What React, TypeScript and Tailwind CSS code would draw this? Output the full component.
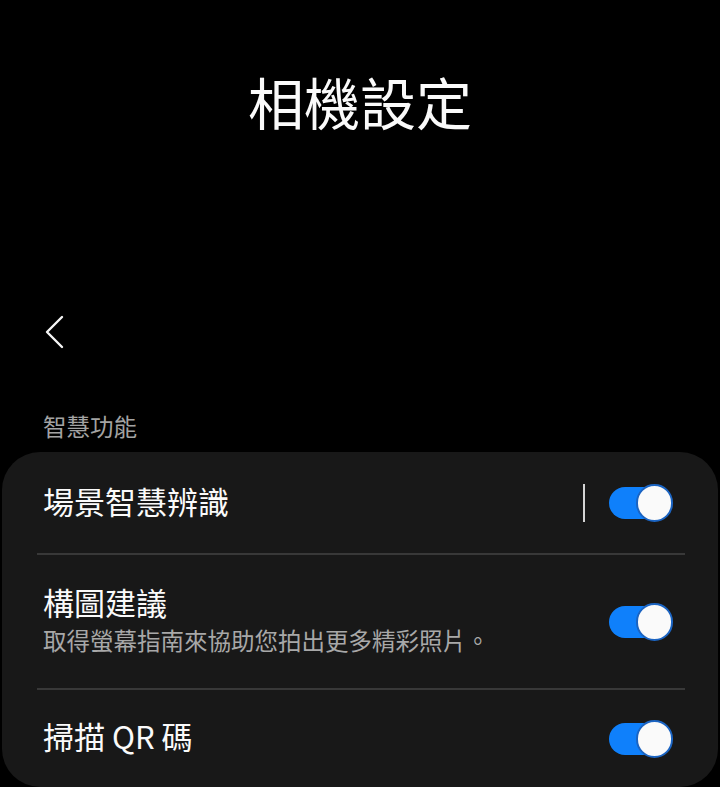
const font = { fontFamily: '"Noto Sans CJK TC", "Noto Sans", sans-serif' };

const Toggle = () => (
  <div className="relative w-[64px] h-[38px] shrink-0">
    <div className="absolute left-0 top-[3px] w-[50px] h-[32px] rounded-full bg-[#0f80fb]" />
    <div className="absolute right-0 top-0 w-[37px] h-[38px] rounded-full bg-[#fafafa] border-2 border-[#1b64c2]" />
  </div>
);

const Divider = () => <div className="ml-[35px] mr-[33px] h-[2px] bg-[#383838]" />;

export default function App() {
  return (
    <div className="min-h-[787px] bg-black text-white overflow-hidden" style={font}>
      <h1 className="pt-[67px] text-center text-[56px] leading-[68px] font-normal text-[#fafafa]">
        相機設定
      </h1>

      <div className="mt-[179px] ml-[44px] w-[24px] h-[36px] flex items-center">
        <svg width="20" height="34" viewBox="0 0 20 34" fill="none">
          <polyline points="18,2 3,17 18,32" stroke="#f5f5f5" strokeWidth="2.4" strokeLinecap="round" strokeLinejoin="round" />
        </svg>
      </div>

      <div className="mt-[61px] ml-[43px] text-[23.5px] leading-[30px] text-[#a3a3a3]">智慧功能</div>

      <div className="mt-[11px] mx-[2px] h-[335px] rounded-[38px] bg-[#181818] overflow-hidden">
        <div className="h-[101px] pl-[41px] pr-[45px] flex items-center">
          <div className="flex-1 pb-[4px] text-[31px] leading-[40px] text-[#fafafa]">場景智慧辨識</div>
          <div className="w-[2px] h-[38px] bg-[#d4d4d4] mr-[24px]" />
          <Toggle />
        </div>
        <Divider />
        <div className="h-[133px] pl-[41px] pr-[45px] flex items-center">
          <div className="flex-1 pb-[7px]">
            <div className="text-[31px] leading-[40px] text-[#fafafa]">構圖建議</div>
            <div className="mt-[3px] text-[23.5px] leading-[30px] text-[#a8a8a8]">取得螢幕指南來協助您拍出更多精彩照片。</div>
          </div>
          <Toggle />
        </div>
        <Divider />
        <div className="h-[97px] pl-[41px] pr-[45px] flex items-center">
          <div className="flex-1 pb-[5px] text-[31px] leading-[40px] text-[#fafafa]">掃描 QR 碼</div>
          <Toggle />
        </div>
      </div>
    </div>
  );
}
